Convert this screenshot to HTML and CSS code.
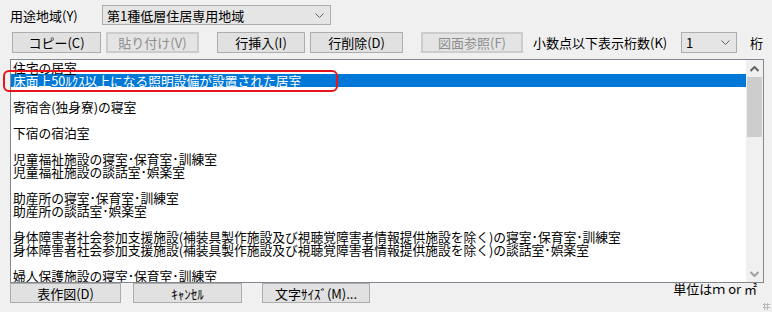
FILE: index.html
```html
<!DOCTYPE html>
<html lang="ja">
<head>
    <meta charset="UTF-8">
    <title>居室の用途</title>
    <link rel="stylesheet" href="styles.css">
</head>
<body>
    <div class="dialog">
        <div class="row row-zone">
            <span class="label zone-label">用途地域(Y)</span>
            <div class="combo combo-zone">
                <span>第1種低層住居専用地域</span>
                <svg class="chev" width="9" height="5" viewBox="0 0 9 5"><path d="M0.5 0.5 L4.5 4.5 L8.5 0.5" fill="none" stroke="#606060" stroke-width="1"/></svg>
            </div>
        </div>

        <div class="row row-tools">
            <button class="btn w-copy">コピー(C)</button>
            <button class="btn w-paste" disabled>貼り付け(V)</button>
            <button class="btn w-ins">行挿入(I)</button>
            <button class="btn w-del">行削除(D)</button>
            <button class="btn w-ref" disabled>図面参照(F)</button>
            <span class="label digits-label">小数点以下表示桁数(K)</span>
            <div class="combo combo-digits">
                <span>1</span>
                <svg class="chev" width="9" height="5" viewBox="0 0 9 5"><path d="M0.5 0.5 L4.5 4.5 L8.5 0.5" fill="none" stroke="#606060" stroke-width="1"/></svg>
            </div>
            <span class="label unit-keta">桁</span>
        </div>

        <div class="listbox">
            <ul class="items" id="items"></ul>
            <div class="scrollbar">
                <div class="sb-arrow">
                    <svg width="9" height="6" viewBox="0 0 9 6"><path d="M0.5 5 L4.5 1 L8.5 5" fill="none" stroke="#606060" stroke-width="2"/></svg>
                </div>
                <div class="sb-thumb"></div>
                <div class="sb-track"></div>
                <div class="sb-arrow">
                    <svg width="9" height="6" viewBox="0 0 9 6"><path d="M0.5 1 L4.5 5 L8.5 1" fill="none" stroke="#a0a0a0" stroke-width="2"/></svg>
                </div>
            </div>
            <div class="mark"></div>
        </div>

        <div class="row row-bottom">
            <button class="btn w-table">表作図(D)</button>
            <button class="btn w-cancel">ｷｬﾝｾﾙ</button>
            <button class="btn w-font">文字ｻｲｽﾞ(M)...</button>
            <span class="units">単位はｍ or ㎡</span>
        </div>
        <div class="grip"></div>
    </div>

    <script>
        // Rows of the room list; empty strings are spacer rows
        const rows = [
            '住宅の居室',
            '床面上50ﾙｸｽ以上になる照明設備が設置された居室',
            '',
            '寄宿舎(独身寮)の寝室',
            '',
            '下宿の宿泊室',
            '',
            '児童福祉施設の寝室･保育室･訓練室',
            '児童福祉施設の談話室･娯楽室',
            '',
            '助産所の寝室･保育室･訓練室',
            '助産所の談話室･娯楽室',
            '',
            '身体障害者社会参加支援施設(補装具製作施設及び視聴覚障害者情報提供施設を除く)の寝室･保育室･訓練室',
            '身体障害者社会参加支援施設(補装具製作施設及び視聴覚障害者情報提供施設を除く)の談話室･娯楽室',
            '',
            '婦人保護施設の寝室･保育室･訓練室'
        ];
        const list = document.getElementById('items');
        rows.forEach((text, i) => {
            const li = document.createElement('li');
            li.textContent = text;
            if (i === 1) li.className = 'selected';
            list.appendChild(li);
        });
    </script>
</body>
</html>
```

FILE: styles.css
```css
body {
    margin: 0;
    background-color: #f0f0f0;
    font-family: "Noto Sans CJK JP", "Noto Sans", sans-serif;
    font-size: 13px;
    color: #000;
}

.dialog {
    position: relative;
    width: 772px;
    height: 312px;
    padding: 5px 0 0 10px;
    box-sizing: border-box;
}

.row {
    display: flex;
    align-items: center;
}

.label {
    line-height: 13px;
    white-space: nowrap;
}

.zone-label {
    width: 92px;
}

.combo {
    display: flex;
    align-items: center;
    justify-content: space-between;
    box-sizing: border-box;
    height: 20px;
    border: 1px solid #adadad;
    background-color: #e5e5e5;
    padding: 0 6px 0 4px;
    line-height: 13px;
}

.combo-zone {
    width: 229px;
}

.row-tools {
    margin-top: 7px;
    height: 21px;
}

.btn {
    box-sizing: border-box;
    height: 21px;
    margin: 0;
    padding: 0;
    border: 1px solid #adadad;
    background-color: #e1e1e1;
    font-family: inherit;
    font-size: 13px;
    line-height: 13px;
    color: #000;
}

.btn:disabled {
    border: 2px solid #cccccc;
    background-color: #e4e4e4;
    color: #8d8d8d;
}

.w-copy { width: 89px; margin-left: 2px; }
.w-paste { width: 93px; margin-left: 5px; }
.w-ins { width: 88px; margin-left: 18px; }
.w-del { width: 93px; margin-left: 5px; }
.w-ref { width: 102px; margin-left: 18px; }

.digits-label {
    width: 148px;
    margin-left: 10px;
}

.combo-digits {
    width: 56px;
    height: 21px;
}

.unit-keta {
    margin-left: 13px;
}

.listbox {
    position: relative;
    display: flex;
    box-sizing: border-box;
    width: 754px;
    height: 224px;
    margin-top: 6px;
    border: 1px solid #828790;
    background-color: #fff;
}

.items {
    flex: 1;
    margin: 0;
    padding: 1px 0 0 0;
    list-style: none;
    overflow: hidden;
    font-size: 12.75px;
}

.items li {
    height: 13px;
    line-height: 13px;
    padding-left: 2px;
    white-space: nowrap;
}

.items li.selected {
    background-color: #0078d7;
    color: #fff;
}

.scrollbar {
    display: flex;
    flex-direction: column;
    width: 17px;
    background-color: #f0f0f0;
}

.sb-arrow {
    display: flex;
    align-items: center;
    justify-content: center;
    height: 17px;
}

.sb-thumb {
    height: 60px;
    margin: 0 1px;
    background-color: #cdcdcd;
}

.sb-track {
    flex: 1;
}

/* red annotation around the selected row */
.mark {
    position: absolute;
    left: -8px;
    top: 10px;
    width: 331px;
    height: 18px;
    border: 2px solid #e8141c;
    border-radius: 6px;
}

.row-bottom {
    height: 20px;
}

.row-bottom .btn {
    height: 20px;
}

.w-table { width: 111px; }
.w-cancel { width: 109px; margin-left: 12px; }
.w-font { width: 108px; margin-left: 20px; }

.units {
    margin-left: auto;
    margin-right: 15px;
    align-self: flex-start;
    line-height: 13px;
    margin-top: -1px;
}

.grip {
    position: absolute;
    right: 2px;
    bottom: 2px;
    width: 7px;
    height: 7px;
    background-image: radial-gradient(circle, #b8b8b8 1px, transparent 1.2px);
    background-size: 3px 3px;
}
```
